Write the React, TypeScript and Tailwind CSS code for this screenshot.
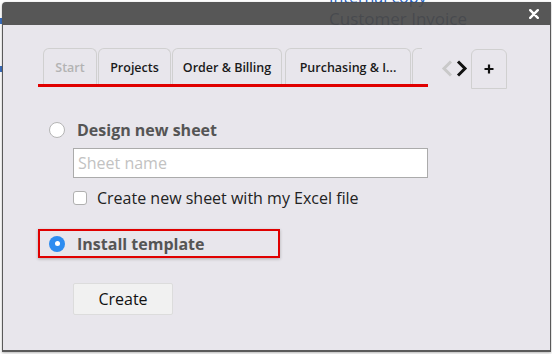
import React from "react";

function Chevron({ dir, color }: { dir: "left" | "right"; color: string }) {
  return (
    <svg width="12" height="17" viewBox="0 0 12 17">
      {dir === "left" ? (
        <polyline points="10,1.5 3,8.5 10,15.5" fill="none" stroke={color} strokeWidth="3" />
      ) : (
        <polyline points="2,1.5 9,8.5 2,15.5" fill="none" stroke={color} strokeWidth="3" />
      )}
    </svg>
  );
}

function Tab({ label, muted, w }: { label: string; muted?: boolean; w: string }) {
  return (
    <div
      className={`${w} h-[36px] shrink-0 flex items-center justify-center pt-[4px] rounded-t-[6px] border border-b-0 border-[#d0d0d0] text-[12.5px] font-semibold ${
        muted ? "text-[#b3b3b3]" : "text-[#1a1a1a]"
      }`}
    >
      {label}
    </div>
  );
}

export default function App() {
  return (
    <div
      className="relative w-[552px] h-[354px] bg-white overflow-hidden"
      style={{ fontFamily: '"Open Sans", "Liberation Sans", sans-serif' }}
    >
      {/* page behind */}
      <div className="absolute left-[329px] top-[-12px] text-[16px] leading-[18px] text-[#1d5fc4]">
        Internal copy
      </div>
      <div className="absolute left-[329px] top-[9px] text-[17px] leading-[20px] text-[#2b4a85]">
        Customer Invoice
      </div>
      <div className="absolute left-0 top-[18px] w-[2px] h-[6px] bg-[#3b6fc0]" />
      <div className="absolute left-0 top-[66px] w-[2px] h-[6px] bg-[#3b6fc0]" />

      {/* dialog */}
      <div className="absolute left-[2px] top-[2px] w-[549px] h-[350px] flex flex-col rounded-tl-[4px] overflow-hidden shadow-[0_1px_3px_rgba(0,0,0,0.3)]">
        <div className="h-[23px] shrink-0 bg-[#4a4a4a]/[0.93] flex items-center justify-end pr-[12px]">
          <svg width="10" height="10" viewBox="0 0 10 10">
            <path d="M1.2 1.2 L8.8 8.8 M8.8 1.2 L1.2 8.8" stroke="white" strokeWidth="2.4" strokeLinecap="round" />
          </svg>
        </div>
        <div className="flex-1 bg-[#e8e6ec] border-l border-r border-b-2 border-[#5a5a5a] flex flex-col pl-[35px] pt-[23px]">
          {/* tabs row */}
          <div className="flex items-start">
            <div className="w-[390px] h-[39px] border-b-[3px] border-[#e00000] flex items-end pl-[5px]">
              <div className="w-[379px] h-[36px] overflow-hidden flex items-end gap-[1px]">
                <Tab label="Start" muted w="w-[54px]" />
                <Tab label="Projects" w="w-[73px]" />
                <Tab label="Order & Billing" w="w-[110px]" />
                <div className="w-[1px] shrink-0" />
                <Tab label="Purchasing & I..." w="w-[126px]" />
                <Tab label="" w="w-[60px]" />
              </div>
            </div>
            <div className="flex items-center ml-[13px] mt-[12px] gap-[3px]">
              <Chevron dir="left" color="#c9c9c9" />
              <Chevron dir="right" color="#111" />
            </div>
            <div className="ml-[3px] mt-[1px] w-[36px] h-[40px] rounded-t-[6px] border border-[#d0d0d0] flex items-center justify-center">
              <svg width="10" height="10" viewBox="0 0 10 10">
                <path d="M5 0.5 V9.5 M0.5 5 H9.5" stroke="#111" strokeWidth="2.2" />
              </svg>
            </div>
          </div>

          {/* design new sheet */}
          <div className="mt-[31px] flex items-center h-[20px] pl-[11px]">
            <div className="w-[16px] h-[16px] rounded-full bg-white border border-[#b5b5b5]" />
            <span className="ml-[12px] text-[16px] font-bold text-[#555]">Design new sheet</span>
          </div>
          <div className="mt-[8px] ml-[35px] w-[355px] h-[30px] bg-white border border-[#ababab] flex items-center px-[4px] text-[16px] text-[#c2c2c2]">
            Sheet name
          </div>
          <div className="mt-[10px] ml-[35px] flex items-center h-[20px]">
            <div className="w-[14px] h-[14px] rounded-[3px] bg-white border border-[#b0b0b0]" />
            <span className="ml-[10px] text-[16px] text-[#222]">Create new sheet with my Excel file</span>
          </div>

          {/* install template */}
          <div className="mt-[21px] w-[242px] h-[29px] border-2 border-[#e00000] shadow-[0_1px_3px_rgba(0,0,0,0.25)] flex items-center pl-[9px]">
            <div className="w-[16px] h-[16px] rounded-full bg-[#2d8cf0] flex items-center justify-center">
              <div className="w-[5px] h-[5px] rounded-full bg-white" />
            </div>
            <span className="ml-[12px] text-[16px] font-bold text-[#555]">Install template</span>
          </div>

          <button className="mt-[25px] ml-[35px] w-[100px] h-[32px] bg-[#f1f1f1] border border-[#dcdcdc] rounded-[2px] text-[16px] text-[#111]">
            Create
          </button>
        </div>
      </div>
    </div>
  );
}
